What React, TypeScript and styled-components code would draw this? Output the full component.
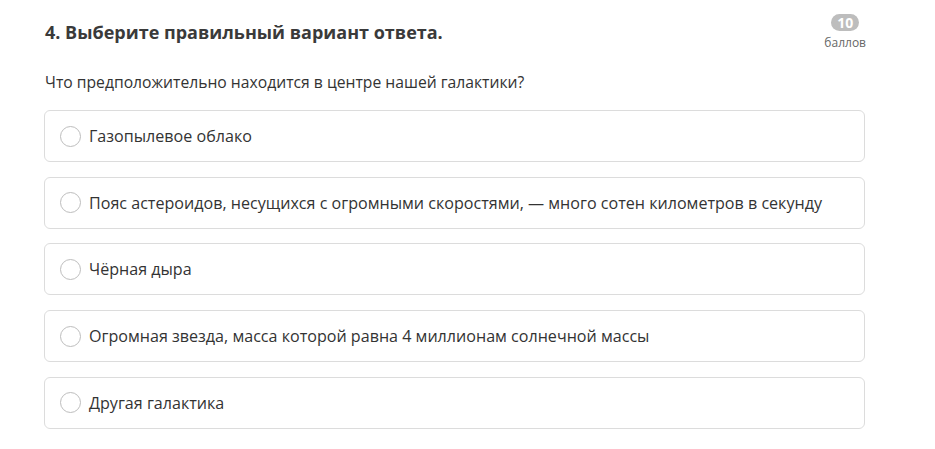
import styled, { createGlobalStyle } from "styled-components";

const GlobalStyle = createGlobalStyle`
  body {
    margin: 0;
    background: #ffffff;
    font-family: "Open Sans", "Liberation Sans", sans-serif;
    color: #333333;
  }
`;

const Container = styled.div`
  width: 821px;
  padding: 13px 0 0 44px;
`;

const Header = styled.header`
  display: flex;
  justify-content: space-between;
  align-items: flex-start;
`;

const Title = styled.h2`
  margin: 7px 0 0 1px;
  font-size: 18px;
  font-weight: 700;
  color: #3a3a3a;
`;

const Score = styled.div`
  display: flex;
  flex-direction: column;
  align-items: center;
  margin-right: -1px;
  margin-top: 1px;
`;

const Badge = styled.span`
  background: #bdbdbd;
  color: #ffffff;
  font-size: 14px;
  font-weight: 700;
  border-radius: 9px;
  padding: 0 6px;
  line-height: 17px;
`;

const ScoreLabel = styled.span`
  font-size: 12px;
  color: #666666;
  margin-top: 3px;
`;

const Question = styled.p`
  margin: 20px 0 0 1px;
  font-size: 15.7px;
  color: #333333;
`;

const Options = styled.ul`
  list-style: none;
  margin: 17px 0 0;
  padding: 0;
  display: flex;
  flex-direction: column;
  gap: 14.7px;
`;

const Option = styled.li`
  display: flex;
  align-items: center;
  height: 50px;
  border: 1px solid #dcdcdc;
  border-radius: 6px;
  padding: 0 15px;
  gap: 8px;
  font-size: 16.1px;
  color: #333333;
  cursor: pointer;
`;

const Radio = styled.span`
  width: 19px;
  height: 19px;
  border: 1px solid #bdbdbd;
  border-radius: 50%;
  flex-shrink: 0;
`;

const answers = [
  "Газопылевое облако",
  "Пояс астероидов, несущихся с огромными скоростями, — много сотен километров в секунду",
  "Чёрная дыра",
  "Огромная звезда, масса которой равна 4 миллионам солнечной массы",
  "Другая галактика",
];

const App = () => {
  return (
    <Container>
      <GlobalStyle />
      <Header>
        <Title>4. Выберите правильный вариант ответа.</Title>
        <Score>
          <Badge>10</Badge>
          <ScoreLabel>баллов</ScoreLabel>
        </Score>
      </Header>
      <Question>Что предположительно находится в центре нашей галактики?</Question>
      <Options>
        {answers.map((a) => (
          <Option key={a}>
            <Radio />
            {a}
          </Option>
        ))}
      </Options>
    </Container>
  );
};

export default App;
